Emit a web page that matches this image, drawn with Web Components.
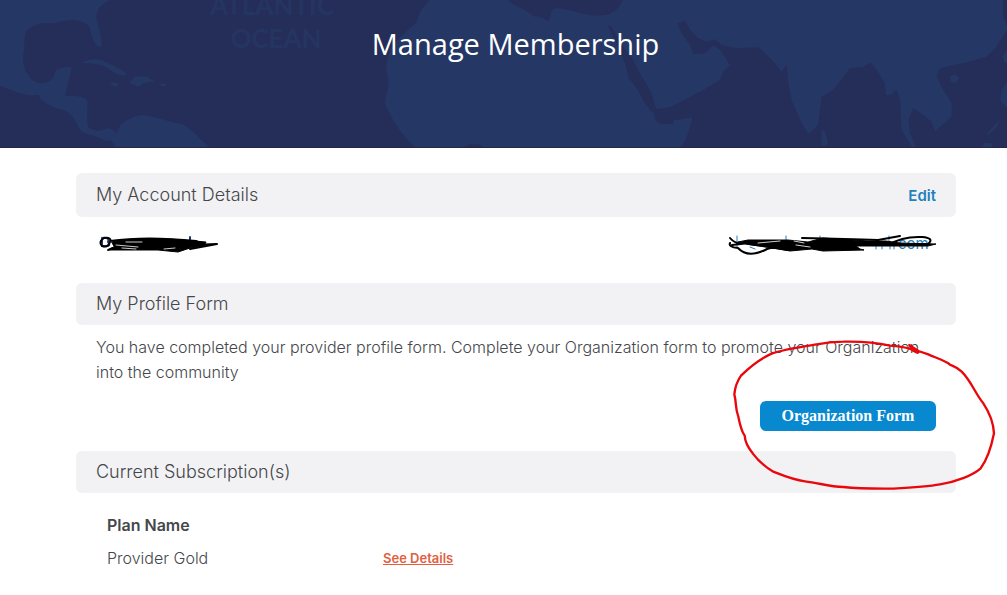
<!DOCTYPE html>
<html lang="en">
<head>
<meta charset="utf-8">
<meta name="viewport" content="width=device-width, initial-scale=1">
<title>Manage Membership</title>
<style>
body { margin: 0; background: #fff; color: #45474b; font: 300 16px/25px Inter, "Open Sans", sans-serif; }
</style>
</head>
<body>
<membership-page></membership-page>

<template id="hero-tpl">
<style>
:host { display: block; position: relative; height: 148px; overflow: hidden; background: #252d59; box-sizing: border-box; }
svg { position: absolute; inset: 0; width: 100%; height: 100%; }
h1 { position: relative; margin: 0; padding: 24px 0 0 24px; text-align: center; color: #fff; font: 400 29px/40px "Open Sans", sans-serif; }
.land { fill: #253765; }
.sea { fill: #252d59; }
text { fill: #253562; font: 700 26px Lato, sans-serif; text-anchor: middle; }
</style>
<svg viewBox="0 0 1007 148" preserveAspectRatio="xMidYMid slice" aria-hidden="true">
<text x="272" y="15">ATLANTIC</text><text x="276" y="48">OCEAN</text>
<g transform="scale(.33333)" class="land">
<path d="M0 0H330C300 15 285 35 290 60C300 90 308 130 304 140C285 145 275 110 270 85C262 65 230 58 200 62C170 62 175 72 140 70C110 68 95 80 78 95C72 110 75 130 72 150C66 185 70 205 85 225C95 245 120 255 145 245C165 240 160 215 172 208C190 200 205 198 215 204C210 230 200 265 195 288C215 285 250 288 262 300C265 330 258 350 265 380C280 395 300 395 320 385C335 385 345 395 350 400C355 375 380 352 425 345C470 348 500 365 545 372C575 385 590 410 630 442H345C340 425 335 415 320 425C300 410 265 405 245 395C225 370 225 345 190 330C150 320 130 310 115 285C80 290 60 280 0 258Z"/>
<path d="M246 190C265 172 300 175 325 190C345 200 370 210 382 224C360 232 340 220 325 205C300 190 270 190 246 190ZM388 250L405 228 440 230 464 244 430 250 418 260ZM330 250L345 247 358 255 345 261ZM482 250L500 252 494 260 480 257Z"/>
</g>
<g transform="translate(340) scale(.33333)">
<path class="land" d="M270 0C250 20 235 35 232 65C205 90 165 120 150 150C138 190 135 200 145 240C148 265 135 285 135 310C150 350 180 400 225 444H2010V0Z"/>
<path class="sea" d="M505 0C520 20 570 30 580 50C600 45 615 60 625 62C635 45 630 30 645 25C680 20 740 55 790 45C820 45 840 20 848 0ZM802 75L815 82C845 130 860 160 880 180C890 210 915 240 935 280L948 328H1000V372H965L947 362 942 340C905 310 895 260 865 235C862 190 830 130 802 75ZM365 444L390 433 420 434 432 444Z"/>
</g>
<g transform="translate(670) scale(.33333)">
<path class="sea" d="M-43 328L0 322 100 270 150 240 160 215 180 195 150 150 130 135 105 160 70 162 60 135 35 100 22 70 45 62 60 90 85 115 110 125 135 118 155 135 200 145 265 142 290 165 315 190 335 215 350 195 355 250 365 300 395 370 415 402 430 390 445 372V444H30C50 420 55 400 68 352C40 358 0 360 -30 370ZM445 372L455 290 490 270 540 205 580 200 603 188 620 210 645 250 648 285 662 285 680 270 690 300 695 390 728 444H445ZM715 360L730 325 760 345 785 365 795 395 845 350 845 310 820 270 800 230 810 205 850 195 880 190 950 170 980 140 1011 90V444H740L720 400ZM998 0H1011V75L1001 55Z"/>
<path class="land" d="M455 385L465 398 474 425 468 438 454 436ZM840 228L858 222 868 235 855 250 842 246ZM1011 150L998 170 1004 190 1011 188ZM1011 245L995 270 990 300 1011 325ZM932 444L942 428 965 430 968 444ZM950 402L988 360 980 382 955 404Z"/>
</g>
<path fill="#252747" d="M0 147h1007v1H0z"/>
</svg>
<h1><slot></slot></h1>
</template>

<template id="bar-tpl">
<style>
:host { display: flex; align-items: center; justify-content: space-between; box-sizing: border-box; min-height: 42px; padding: 0 20px; border-radius: 6px; background: #f2f2f5; }
h2 { margin: 0; font: 300 18px/24px Inter, sans-serif; }
</style>
<h2><slot></slot></h2><slot name="action"></slot>
</template>

<template id="account-tpl">
<style>
:host { display: flex; justify-content: space-between; align-items: center; height: 66px; box-sizing: border-box; padding: 0 18px 14px 22px; }
svg { display: block; overflow: visible; }
path { fill: none; stroke: #000; stroke-width: 2; stroke-linecap: round; stroke-linejoin: round; }
.ink { stroke: #243672; }
.link { stroke: #2480bd; stroke-width: 1; }
.solid { fill: #000; stroke-width: 1; }
text { fill: #2480bd; font: 400 15px Inter, sans-serif; }
</style>
<svg width="122" height="22" viewBox="0 0 122 22" role="img" aria-label="Name, crossed out">
<path class="ink" d="M4 6V14M4 6Q12 5 10 10Q14 15 5 14M92 5V10"/>
<path d="M4 14Q0 10 6 6Q14 5 12 10Q10 16 4 14M12 9Q48 4 98 9L106 13 119 12 92 17M10 18Q16 14 30 17"/>
<path class="solid" d="M14 10L22 8Q55 5 84 8L108 10 107 12 118 12 92 16 80 20 60 18 20 18 10 18 16 15Z"/>
<path stroke="#fff" stroke-width="1" style="stroke:#ccc;stroke-width:1" d="M18 13L40 15M24 16L38 17M28 10L44 10M66 17L77 16"/>
</svg>
<svg width="210" height="24" viewBox="0 0 210 24" role="img" aria-label="Email address, crossed out">
<path class="link" d="M9 5V16M58 5V14M92 5V12M161 5V14M22 16L27 18M148 12V18M154 12V18M162 12V18M166 12V18"/>
<text x="170" y="18">com</text>
<path d="M2 7Q6 12 14 13M2 12Q0 16 10 17Q20 28 39 18Q50 14 60 16M4 14L30 11M14 12L60 19M74 7Q120 8 150 9L172 5M160 14Q175 5 194 6Q207 7 200 13L185 14"/>
<path class="solid" d="M10 11L20 9 60 9 80 11 95 7 140 10 158 10 172 12 208 13 200 15 150 15 128 15 132 18 136 19 95 20 84 18 62 20 40 16 24 14Z"/>
<path style="stroke:#ccc;stroke-width:1" d="M30 12L52 10M68 14L82 16M66 10L76 12"/>
</svg>
</template>

<template id="action-tpl">
<style>
:host { display: block; position: relative; width: 176px; }
button { display: block; width: 100%; height: 30px; padding: 0; border: 0; border-radius: 6px; background: #0788cf; color: #fff; font: 700 16px/30px "Liberation Serif", serif; cursor: pointer; }
svg { position: absolute; left: -30px; top: -65px; z-index: 2; pointer-events: none; }
path { fill: none; stroke: #e9070b; stroke-width: 7; stroke-linecap: round; stroke-linejoin: round; }
</style>
<button type="button"><slot></slot></button>
<svg width="270" height="160" viewBox="60 33 810 480" aria-hidden="true">
<path d="M625 82C600 68 560 63 540 62C500 53 440 49 400 50C370 50 340 54 320 58C270 67 210 75 180 88C145 105 115 130 93 152C82 168 75 185 73 208C80 235 75 250 85 275C90 300 95 320 104 332C105 350 112 365 128 385C145 408 165 425 190 440C220 452 250 465 285 469C330 475 360 485 400 486C450 492 500 491 550 491C600 488 650 485 690 478C740 470 790 450 812 430C835 400 845 360 852 325C850 290 840 265 820 235C795 205 785 170 755 140C735 120 725 125 715 115C690 100 675 98 655 88L625 78L598 60L608 76L622 83"/>
</svg>
</template>

<template id="plans-tpl">
<style>
:host { display: block; padding: 15px 20px 0 31px; }
table { border-collapse: collapse; width: 100%; table-layout: fixed; }
th, td { height: 33px; padding: 0; text-align: left; font-size: 16px; line-height: 24px; font-weight: 300; }
th { font-weight: 600; }
th:first-child { width: 276px; }
a { color: #e2603f; font-size: 13px; font-weight: 600; text-decoration: underline; }
</style>
<table>
<thead><tr><th scope="col">Plan Name</th><th></th></tr></thead>
<tbody><tr><td>Provider Gold</td><td><a href="#details">See Details</a></td></tr></tbody>
</table>
</template>

<template id="page-tpl">
<style>
:host { display: block; }
main { padding: 25px 51px 20px 76px; }
.account { min-height: 44px; }
a { color: #2480bd; font-size: 15px; font-weight: 600; text-decoration: none; }
p { margin: 0; padding: 10px 20px 16px; }
.actions { display: flex; justify-content: flex-end; padding: 0 20px 20px; }
</style>
<page-hero>Manage Membership</page-hero>
<main>
<section-bar class="account">My Account Details<a slot="action" href="#edit">Edit</a></section-bar>
<account-row></account-row>
<section-bar>My Profile Form</section-bar>
<p>You have completed your provider profile form. Complete your Organization form to promote your Organization into the community</p>
<div class="actions"><form-button>Organization Form</form-button></div>
<section-bar>Current Subscription(s)</section-bar>
<plan-table></plan-table>
</main>
</template>

<script>
const define = (name, id) => customElements.define(name, class extends HTMLElement {
  constructor() {
    super();
    this.attachShadow({ mode: "open" }).append(document.getElementById(id).content.cloneNode(true));
  }
});
define("page-hero", "hero-tpl");
define("section-bar", "bar-tpl");
define("account-row", "account-tpl");
define("form-button", "action-tpl");
define("plan-table", "plans-tpl");
define("membership-page", "page-tpl");
</script>
</body>
</html>
